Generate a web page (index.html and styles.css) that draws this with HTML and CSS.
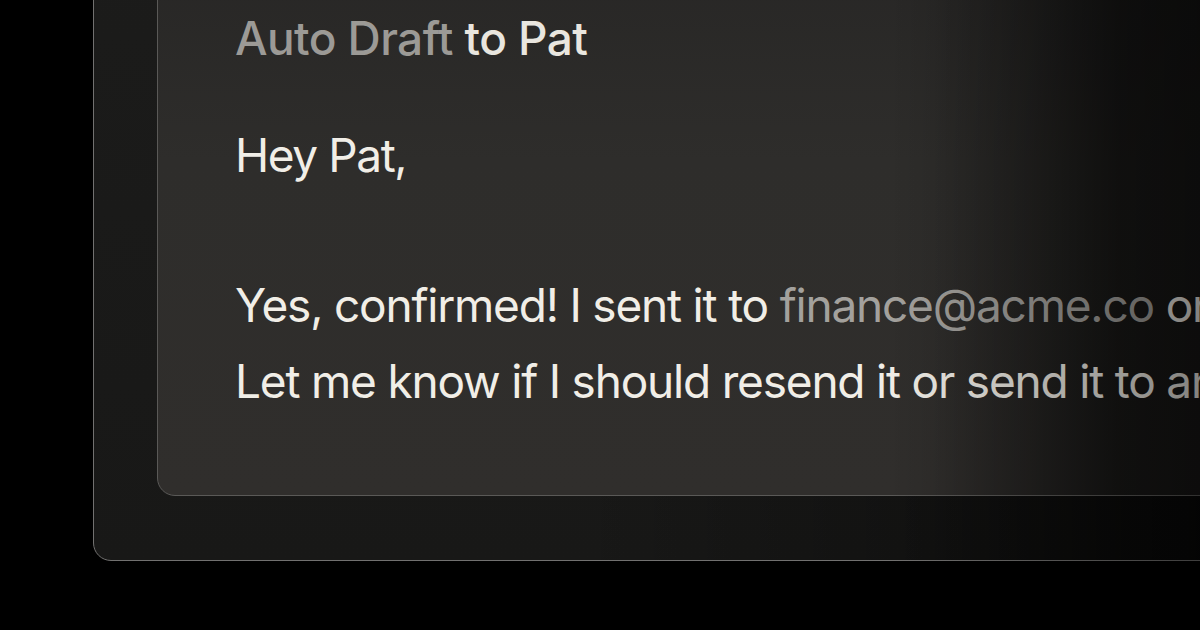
FILE: index.html
```html
<!DOCTYPE html>
<html lang="en">
<head>
<meta charset="utf-8">
<title>Auto Draft</title>
<link rel="stylesheet" href="styles.css">
</head>
<body>
<div class="stage">
  <div class="outer-card">
    <div class="draft-card">
      <h1 class="draft-title"><span class="label">Auto Draft</span> to Pat</h1>
      <p class="greeting">Hey Pat,</p>
      <p class="message">Yes, confirmed! I sent it to <span class="email">finance@acme.co</span> on Friday.<br>Let me know if I should resend it or send it to another address.</p>
    </div>
  </div>
</div>
</body>
</html>
```

FILE: styles.css
```css
html, body {
  margin: 0;
  padding: 0;
  background: #000;
}
body {
  width: 1200px;
  height: 630px;
  overflow: hidden;
  font-family: "Inter", "Liberation Sans", sans-serif;
}
.stage {
  position: relative;
  height: 630px;
  box-sizing: border-box;
  padding-left: 93px;
  padding-bottom: 69px;
  display: flex;
  align-items: flex-end;
  overflow: hidden;
}
.stage::after {
  content: "";
  position: absolute;
  inset: 0;
  pointer-events: none;
  background: linear-gradient(to right, rgba(0,0,0,0) 0%, rgba(0,0,0,0) 74%, rgba(0,0,0,0.25) 87%, rgba(0,0,0,0.45) 100%);
}
.outer-card {
  flex: none;
  width: 1300px;
  height: 700px;
  box-sizing: border-box;
  border: 1px solid #727170;
  border-radius: 18px;
  background:
    linear-gradient(to right, rgba(0,0,0,0) 480px, rgba(0,0,0,0.25) 800px, rgba(0,0,0,0.6) 1030px, rgba(0,0,0,0.65) 1110px),
    linear-gradient(to bottom, #1c1c1b, #181817);
  padding-left: 63px;
  padding-bottom: 64px;
  display: flex;
  align-items: flex-end;
}
.draft-card {
  flex: none;
  width: 1200px;
  box-sizing: border-box;
  border: 1px solid #5a5957;
  border-radius: 18px;
  background:
    linear-gradient(to right, rgba(0,0,0,0) 772px, rgba(0,0,0,0.23) 875px, rgba(0,0,0,0.49) 962px, rgba(0,0,0,0.52) 1042px),
    linear-gradient(to bottom, #272625 0px, #2e2d2b 220px, #302e2c 100%);
  padding: 60px 0 76px 77px;
  color: #f1eee7;
  white-space: nowrap;
}
.draft-title {
  margin: 0;
  font-size: 46px;
  line-height: 76px;
  font-weight: 500;
  letter-spacing: -0.6px;
  color: #e9e6df;
}
.label {
  color: #9c9a96;
}
.greeting {
  margin: 41px 0 0;
  font-size: 46px;
  line-height: 76px;
  font-weight: 400;
  letter-spacing: -1.4px;
}
.message {
  margin: 74px 0 0;
  font-size: 46px;
  line-height: 76px;
  font-weight: 400;
  letter-spacing: -1.2px;
}
.email {
  color: #a3a19d;
}
```
